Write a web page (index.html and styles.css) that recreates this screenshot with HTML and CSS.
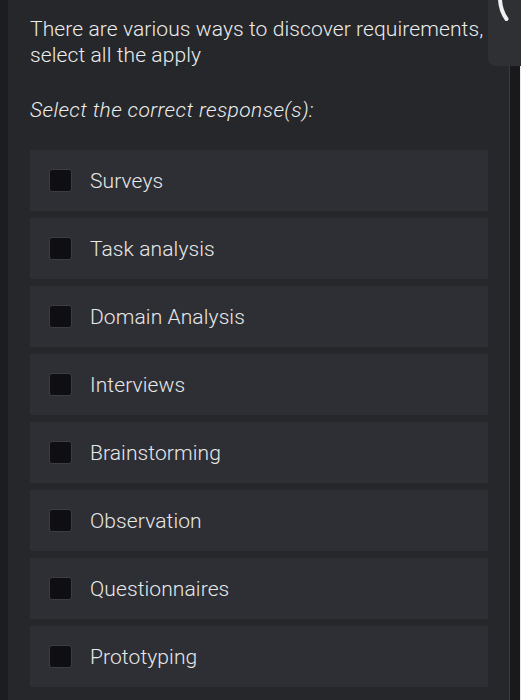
FILE: index.html
```html
<!DOCTYPE html>
<html>
<head>
<meta charset="utf-8">
<link rel="stylesheet" href="styles.css">
</head>
<body>
<div class="frame">
  <div class="edge-left"></div>
  <main class="panel">
    <p class="question">There are various ways to discover requirements, select all the apply</p>
    <p class="prompt">Select the correct response(s):</p>
    <ul class="options">
      <li class="option"><span class="box"></span><span class="label">Surveys</span></li>
      <li class="option"><span class="box"></span><span class="label">Task analysis</span></li>
      <li class="option"><span class="box"></span><span class="label">Domain Analysis</span></li>
      <li class="option"><span class="box"></span><span class="label">Interviews</span></li>
      <li class="option"><span class="box"></span><span class="label">Brainstorming</span></li>
      <li class="option"><span class="box"></span><span class="label">Observation</span></li>
      <li class="option"><span class="box"></span><span class="label">Questionnaires</span></li>
      <li class="option"><span class="box"></span><span class="label">Prototyping</span></li>
    </ul>
  </main>
  <div class="edge-right"></div>
  <div class="tab">
    <svg class="chev" width="33" height="30" viewBox="0 0 33 30"><path d="M12 -4 Q11.5 9 18.5 19" fill="none" stroke="#f0f0f0" stroke-width="4" stroke-linecap="round"/></svg>
  </div>
</div>
</body>
</html>
```

FILE: styles.css
```css
*, *::before, *::after {
  box-sizing: border-box;
}
html, body {
  margin: 0;
  padding: 0;
  background: #1c1d20;
}
.frame {
  position: relative;
  display: flex;
  width: 521px;
  height: 700px;
  overflow: hidden;
  font-family: Roboto, "Liberation Sans", sans-serif;
  font-weight: 300;
}
.edge-left {
  width: 8px;
  background: #1c1d20;
  flex: none;
}
.panel {
  width: 502px;
  flex: none;
  background: #26272b;
  padding: 16px 21px 0 22px;
  border-right: 1px solid #3a3b40;
}
.edge-right {
  flex: 1;
  background: #19191b;
  border-right: 1px solid #e8e8e8;
}
.question {
  margin: 0;
  font-size: 21px;
  line-height: 26px;
  color: #ececec;
  letter-spacing: 0.1px;
}
.prompt {
  margin: 29px 0 0;
  font-size: 21px;
  line-height: 26px;
  font-style: italic;
  color: #ececec;
  letter-spacing: 0.4px;
}
.options {
  list-style: none;
  margin: 27px 0 0;
  padding: 0;
  display: flex;
  flex-direction: column;
  gap: 7px;
}
.option {
  height: 61px;
  background: #2e2f34;
  display: flex;
  align-items: center;
  padding-left: 19px;
  gap: 18px;
}
.box {
  width: 23px;
  height: 23px;
  background: #0f0f13;
  border: 1px solid #3c3d42;
  border-radius: 3px;
  flex: none;
}
.label {
  font-size: 21px;
  color: #e8e8e8;
  letter-spacing: 0.1px;
}
.tab {
  position: absolute;
  top: 0;
  left: 488px;
  width: 33px;
  height: 66px;
  background: #2f3034;
  border-bottom-left-radius: 8px;
}
.chev {
  position: absolute;
  left: 0;
  top: 0;
}
```
